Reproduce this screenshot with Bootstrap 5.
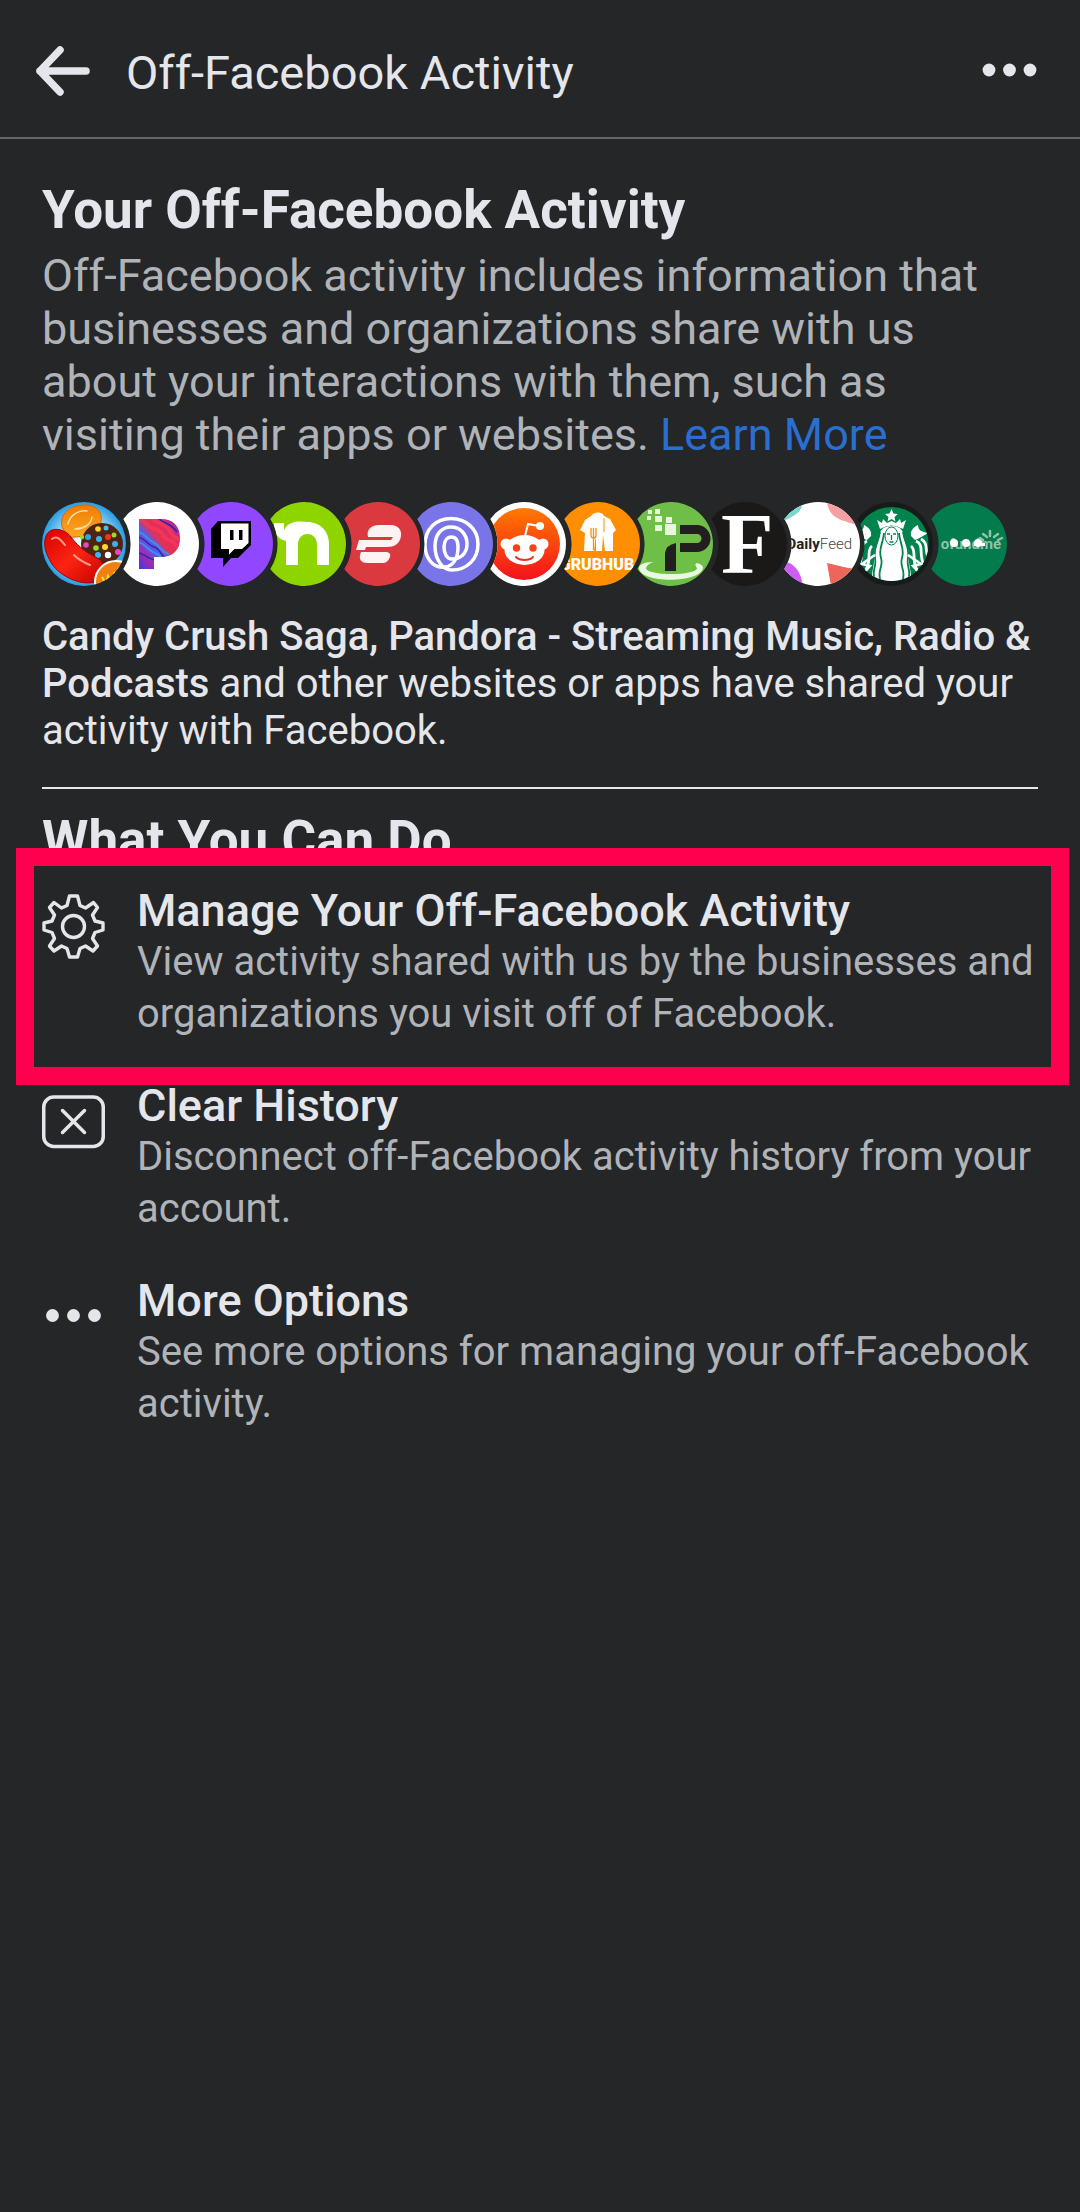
<!DOCTYPE html>
<html lang="en">
<head>
<meta charset="utf-8">
<meta name="viewport" content="width=device-width, initial-scale=1">
<title>Off-Facebook Activity</title>
<link href="https://cdn.jsdelivr.net/npm/bootstrap@5.3.0/dist/css/bootstrap.min.css" rel="stylesheet">
<style>
  :root { --page: #242628; --light: #e4e6eb; --muted: #b0b3b8; }
  body { background: var(--page); color: var(--light); font-family: Roboto, "Liberation Sans", sans-serif; }
  .topbar { height: 139px; padding: 9px 42px 0 36px; border-bottom: 2px solid #65676b; }
  .topbar-title { font-size: 47px; line-height: 56px; font-weight: 400; margin-left: 34px; }
  .icon-btn { background: none; border: 0; padding: 0; line-height: 0; }
  .page-body { padding: 40px 42px; }
  .section-title { font-size: 53px; line-height: 62px; font-weight: 700; margin: 0; }
  .intro { font-size: 45px; line-height: 53px; color: var(--muted); margin: 8px 0 0; }
  .intro a { color: #2a6fd0; text-decoration: none; }
  .app-strip { margin: 41px 42px 0 0; padding: 0; height: 84px; list-style: none; }
  .app-strip li { flex: 1 1 0; min-width: 0; }
  .app-strip svg { display: block; width: 84px; height: 84px; }
  .summary { font-size: 40px; line-height: 47px; margin: 27px 0 33px; }
  .summary strong { font-weight: 500; }
  .rule { border-top: 2px solid var(--light); margin: 0 0 20px; opacity: 1; }
  .options { margin-top: 15px; gap: 41px; }
  .option { gap: 32px; color: var(--light); text-decoration: none; }
  .option > svg { margin-top: 8px; }
  .option-title { font-size: 45px; line-height: 50px; font-weight: 500; margin: 0; }
  .option-text { font-size: 40px; line-height: 52px; color: var(--muted); margin: 0; }
  .callout { position: absolute; inset: -38px -31px -45px -26px; border: 18px solid #ff004f; pointer-events: none; }
</style>
</head>
<body>
<svg width="0" height="0" class="position-absolute" aria-hidden="true">
  <defs>
    <clipPath id="disc"><circle cx="42" cy="42" r="42"/></clipPath>
    <clipPath id="crescent"><path d="M8.3 16.9A42 42 0 1 1 8.3 67.1A47 47 0 0 0 8.3 16.9Z"/></clipPath>
    <radialGradient id="sky"><stop offset="0" stop-color="#fff"/><stop offset=".6" stop-color="#9fdcf8"/><stop offset="1" stop-color="#2a9be0"/></radialGradient>
    <linearGradient id="orangeCandy" x1="0" y1="0" x2="0" y2="1"><stop offset="0" stop-color="#f07c00"/><stop offset="1" stop-color="#ffa726"/></linearGradient>
    <linearGradient id="redCandy" x1="0" y1="0" x2="1" y2="1"><stop offset="0" stop-color="#d80000"/><stop offset=".5" stop-color="#fb2413"/><stop offset="1" stop-color="#c50000"/></linearGradient>
    <linearGradient id="pandora" x1="1" y1="0" x2="0" y2="1"><stop offset="0" stop-color="#7a2bc4"/><stop offset=".25" stop-color="#dd2a6c"/><stop offset=".45" stop-color="#e8304f"/><stop offset=".6" stop-color="#4a62ee"/><stop offset=".8" stop-color="#a02ab0"/><stop offset="1" stop-color="#3a3ce0"/></linearGradient>
    <linearGradient id="reddit" x1="0" y1="0" x2="0" y2="1"><stop offset="0" stop-color="#ff7a00"/><stop offset="1" stop-color="#f5101c"/></linearGradient>
    <clipPath id="pShape"><path d="M24 17H46C58 17 65 24 65 36S58 55 46 55H39V67H24Z"/></clipPath>
    <clipPath id="siren"><circle cx="42.5" cy="42" r="37"/></clipPath>
  </defs>
</svg>

<header class="topbar d-flex align-items-center">
  <button type="button" class="icon-btn" aria-label="Back">
    <svg width="56" height="56" viewBox="0 0 56 56" fill="none" stroke="#e4e6eb" stroke-width="7.5" stroke-linecap="round" stroke-linejoin="round"><path d="M24 5L4 26L24 47M4 26H50"/></svg>
  </button>
  <h1 class="topbar-title mb-0">Off-Facebook Activity</h1>
  <button type="button" class="icon-btn ms-auto" aria-label="More">
    <svg width="56" height="56" viewBox="0 0 56 56" fill="#e4e6eb"><circle cx="7" cy="25" r="6.4"/><circle cx="27.5" cy="25" r="6.4"/><circle cx="48" cy="25" r="6.4"/></svg>
  </button>
</header>

<main class="page-body">
  <h2 class="section-title">Your Off-Facebook Activity</h2>
  <p class="intro">Off-Facebook activity includes information that businesses and organizations share with us about your interactions with them, such as visiting their apps or websites. <a href="#learn">Learn More</a></p>

  <ul class="app-strip d-flex">
    <li><svg viewBox="0 0 84 84" role="img" aria-label="Candy Crush Saga"><g clip-path="url(#disc)">
      <rect width="84" height="84" fill="url(#sky)"/>
      <path d="M20 25C17 9 32 2 45 3C57 4 62 14 58 22C53 33 36 36 26 35Z" fill="url(#orangeCandy)" stroke="#d66a00" stroke-width="1"/>
      <path d="M26 22C28 12 38 8 45 9M33 27C41 27 49 23 50 15" fill="none" stroke="#ffe0a0" stroke-width="1.5" stroke-linecap="round"/>
      <circle cx="60" cy="42" r="21" fill="#4f2410"/>
      <g><circle cx="46" cy="35" r="3" fill="#29a8e8"/><circle cx="56" cy="27" r="2.8" fill="#ffd82a"/><circle cx="64" cy="26" r="2.5" fill="#3ec3f0"/><circle cx="66" cy="35" r="3" fill="#ee3326"/><circle cx="57" cy="37" r="3" fill="#3cb5f0"/><circle cx="44" cy="43" r="2.8" fill="#e04ac8"/><circle cx="54" cy="46" r="2.8" fill="#94dc2a"/><circle cx="63" cy="45" r="3" fill="#ffd82a"/><circle cx="73" cy="42" r="3" fill="#38b2ee"/><circle cx="56" cy="53" r="3" fill="#3cb5f0"/><circle cx="66" cy="53" r="3.2" fill="#fff"/><circle cx="72" cy="33" r="2.5" fill="#94dc2a"/><circle cx="76" cy="50" r="3" fill="#e04ac8"/><circle cx="40" cy="35" r="2.2" fill="#94dc2a"/></g>
      <path d="M4 34C8 24 22 26 29 35C37 46 47 52 57 57C66 64 62 77 53 80C38 84 18 74 10 62C3 51 1 42 4 34Z" fill="url(#redCandy)" stroke="#a80000" stroke-width="1"/>
      <path d="M10 37C15 33 19 38 23 43M32 53C37 58 43 61 48 63" fill="none" stroke="#ff9b85" stroke-width="2" stroke-linecap="round"/>
      <circle cx="74" cy="80" r="21" fill="#f08010" stroke="#fff" stroke-width="2"/>
      <path d="M60 75L64 82L66 74L70 80M72 70L75 77M76 66L80 73" fill="none" stroke="#ffe22a" stroke-width="2"/>
    </g></svg></li>
    <li><svg viewBox="0 0 84 84" role="img" aria-label="Pandora"><g clip-path="url(#crescent)"><rect width="84" height="84" fill="#fff"/>
      <g clip-path="url(#pShape)"><rect x="24" y="17" width="41" height="50" fill="url(#pandora)"/>
      <path d="M22 18C32 17 31 26 40 27S47 37 54 38S60 46 67 48M36 15C42 24 50 19 55 29S62 34 68 40" fill="none" stroke="#f0365a" stroke-width="4"/>
      <path d="M22 30C30 30 31 37 38 40S46 50 54 52M22 40C29 40 32 48 40 51S44 56 50 58" fill="none" stroke="#3f8bf5" stroke-width="2"/>
      <path d="M22 35C30 35 32 43 39 45S46 55 52 57M22 51C28 50 32 57 40 58M44 17C50 22 57 22 62 30" fill="none" stroke="#3525a8" stroke-width="1.5"/></g>
    </g></svg></li>
    <li><svg viewBox="0 0 84 84" role="img" aria-label="Twitch"><g clip-path="url(#crescent)"><rect width="84" height="84" fill="#9147ff"/>
      <path d="M29 19H62V43L49 56H42L34 65V56H22V27Z" fill="#000"/><path d="M32 21.5H59.5V41L53 47H45.5L40 52.5V47H32Z" fill="#fff"/><path d="M41 28H44.5V38H41ZM50 28H53.5V38H50Z" fill="#000"/>
    </g></svg></li>
    <li><svg viewBox="0 0 84 84" role="img" aria-label="Nextdoor"><g clip-path="url(#crescent)"><rect width="84" height="84" fill="#8ed500"/>
      <path d="M12 21H22V28C27 18 38 19 45 20C59 20 67 30 67 42V63H55V43C55 36 51 32 45.5 32S36 36 36 43V63H24V39C16 37 12 32 12 21Z" fill="#fff"/>
    </g></svg></li>
    <li><svg viewBox="0 0 84 84" role="img" aria-label="ExpressVPN"><g clip-path="url(#crescent)"><rect width="84" height="84" fill="#da3940"/>
      <path d="M32 35C30 27 36 23 43 23H55C62 23 66 28 65 34C64 42 58 45 51 45H30L29 48H20L23 38H55L57 35ZM25 50H50C55 50 55 54 53 57C51 61 48 61 45 61H31C25 61 22 57 25 50Z" fill="#fff2f3"/>
    </g></svg></li>
    <li><svg viewBox="0 0 84 84" role="img" aria-label="Life360"><g clip-path="url(#crescent)"><rect width="84" height="84" fill="#7974e7"/>
      <path d="M36 65C22 67 16 53 16 43C16 27 27 16.5 42 16.5S69 27 69 42S58 68 43 68C33 68 26 57 26 44C26 32 33 25 42 25S58 32 58 42S51 57 43 57C38 57 35 52 35 45C35 39 38 35 42.500 35S49 39 49 45C49 57 44 64 36 65Z" fill="none" stroke="#fff" stroke-width="3.5"/>
    </g></svg></li>
    <li><svg viewBox="0 0 84 84" role="img" aria-label="Reddit"><g clip-path="url(#crescent)"><rect width="84" height="84" fill="#fff"/><circle cx="42" cy="42" r="36" fill="url(#reddit)"/>
      <path d="M43 34L46 22L57 24" fill="none" stroke="#fff" stroke-width="2"/><circle cx="58" cy="24" r="4" fill="#fff"/><circle cx="24" cy="42" r="5.5" fill="#fff"/><circle cx="61" cy="42" r="5.5" fill="#fff"/><ellipse cx="42.5" cy="48" rx="20" ry="15" fill="#fff"/>
      <circle cx="34.5" cy="46" r="3.7" fill="#f8401a"/><circle cx="51" cy="46" r="3.7" fill="#f8401a"/><path d="M34 55C38 59 47 59 51 55" fill="none" stroke="#f03020" stroke-width="2" stroke-linecap="round"/>
    </g></svg></li>
    <li><svg viewBox="0 0 84 84" role="img" aria-label="Grubhub"><g clip-path="url(#crescent)"><rect width="84" height="84" fill="#ff8f00"/>
      <path d="M24 28L29 18L35 14C37 10 46 9 48 14L54 17L60 28L57 31V49H49L47 33L46 49H40V32L38 49H28L29 31Z" fill="#fff"/><path d="M35 26V33Q35 36 37.5 36T40 33V26M37.5 26V48" fill="none" stroke="#ff8f00" stroke-width="1.3"/><path d="M48 16V30" stroke="#ff8f00" stroke-width="1"/>
      <text x="41" y="68" text-anchor="middle" font-family="Roboto" font-weight="900" font-size="16" fill="#fff">GRUBHUB</text>
    </g></svg></li>
    <li><svg viewBox="0 0 84 84" role="img" aria-label="IPVanish"><g clip-path="url(#crescent)"><rect width="84" height="84" fill="#6fbe47"/>
      <path d="M19 8h4v4h-4zM26 7h5v5h-5zM18 14h4v4h-4zM26 14h7v6h-7zM37 15h6v6h-6zM26 23h7v6h-7zM36 22h11v11h-11z" fill="#e6f7dd"/>
      <path d="M10 65C8 82 74 82 74 65C71 60 63 60 68 66C68 74 17 74 17 66C19 61 24 60 26 60C18 60 12 61 10 65Z" fill="#e9f8e0"/>
      <path d="M51 27.5H68A9 9 0 0 1 68 45.5H51" fill="none" stroke="#231f20" stroke-width="9"/><path d="M36 69V51Q37 43 47 41V69Z" fill="#231f20"/>
    </g></svg></li>
    <li><svg viewBox="0 0 84 84" role="img" aria-label="Forbes"><g clip-path="url(#crescent)"><rect width="84" height="84" fill="#1b1818"/>
      <text x="18" y="71" font-family="Liberation Serif" font-weight="700" font-size="86" fill="#fff">F</text>
    </g></svg></li>
    <li><svg viewBox="0 0 84 84" role="img" aria-label="DailyFeed"><g clip-path="url(#crescent)"><rect width="84" height="84" fill="#fff"/>
      <path d="M0 0H26C27 9 20 13 8 19H0Z" fill="#79d8cd"/><path d="M51 0H84V24C74 21 71 20 65 18C58 15 52 10 51 0Z" fill="#f5a0a2"/><path d="M0 60H8C18 60 25 70 27 84H0Z" fill="#d05cf8"/><path d="M51 61L72 66L84 67V84H55Z" fill="#ee655a"/>
      <text x="76" y="47" text-anchor="end" font-family="Roboto" font-size="15" fill="#222"><tspan font-weight="700">Daily</tspan><tspan font-weight="300" fill="#444">Feed</tspan></text>
    </g></svg></li>
    <li><svg viewBox="0 0 84 84" role="img" aria-label="Starbucks"><g clip-path="url(#crescent)"><rect width="84" height="84" fill="#171c1a"/><circle cx="42.5" cy="42" r="37" fill="#00834c"/>
      <g clip-path="url(#siren)">
      <path d="M42.5 7L44.5 11.5L49 12L45.5 15L46.5 19.5L42.5 17L38.5 19.5L39.5 15L36 12L40.5 11.5Z" fill="#fff"/>
      <path d="M28 18L33 21L34 17L38 21L42.5 19L47 21L51 17L52 21L57 18L54 27Q42.5 20 31 27Z" fill="#fff"/>
      <path d="M31 32Q32 24 42.5 24T54 32C55 42 61 45 60 55S64 70 61 80H24C21 70 26 65 25 55S30 42 31 32Z" fill="#fff"/>
      <path d="M35 31C34 43 29 46 32 56S27 68 32 80M31 30C29 42 24 46 26 56S22 68 26 78M50 31C51 43 56 46 53 56S58 68 53 80M54 30C56 42 61 46 59 56S63 68 59 78" fill="none" stroke="#00834c" stroke-width="1.8"/>
      <ellipse cx="42.5" cy="34" rx="6.5" ry="9" fill="#fff" stroke="#00834c" stroke-width="1"/>
      <path d="M38 32H41M44 32H47M42.5 33V38M40.5 40H44.5" fill="none" stroke="#00834c" stroke-width="1.3"/>
      <path d="M36 45Q42 50 49 45L48 51C52 58 52 70 50 80H35C33 70 33 58 37 51Z" fill="#fff"/>
      <path d="M62 34C61 28 65 25 69 23C69 29 74 30 79 31C74 34 69 37 66 38ZM22 34C23 28 19 25 15 23C15 29 10 30 5 31C10 34 15 37 18 38Z" fill="#fff"/>
      <path d="M67 39C76 43 69 52 75 63M72 37C81 42 74 50 81 58M62 44C68 49 62 56 68 68M18 39C9 43 16 52 10 63M13 37C4 42 11 50 4 58M23 44C17 49 23 56 17 68" fill="none" stroke="#fff" stroke-width="2.8"/>
      <path d="M59 53L72 62L64 64L71 72M26 53L13 62L21 64L14 72" fill="none" stroke="#fff" stroke-width="2.5"/>
      </g>
    </g></svg></li>
    <li><svg viewBox="0 0 84 84" role="img" aria-label="gofundme"><g clip-path="url(#crescent)"><rect width="84" height="84" fill="#047b4c"/>
      <text x="78" y="47" text-anchor="end" font-family="Roboto" font-weight="700" font-size="15" fill="#91c3a9">ofundme</text>
      <path d="M57 36L60 38M60 32L64 35M67 29V34M75 32L71 35M79 36L75 38" stroke="#91c3a9" stroke-width="2.5" stroke-linecap="round"/>
      <g fill="#fff"><circle cx="31" cy="41" r="4"/><circle cx="43" cy="41" r="4"/><circle cx="55" cy="41" r="4"/><path d="M51 41h11v3H51z"/></g>
    </g></svg></li>
  </ul>

  <p class="summary"><strong>Candy Crush Saga, Pandora - Streaming Music, Radio &amp; Podcasts</strong> and other websites or apps have shared your activity with Facebook.</p>
  <hr class="rule">

  <h2 class="section-title">What You Can Do</h2>
  <nav class="options d-flex flex-column" aria-label="What You Can Do">
    <a href="#manage" class="option d-flex align-items-start position-relative">
      <svg class="flex-shrink-0" width="63" height="65" viewBox="0 0 63 65" fill="none" stroke="#e4e6eb" stroke-width="3.4" stroke-linejoin="round" aria-hidden="true">
        <path d="M27.5 2H35.5L38 11.5L43.5 14L51.5 8.5L55.5 13.5L50.5 21L53 27L61 29V36L53 38.5L50.5 44.5L55.5 52L51 57L43.5 52L38 54.5L35.5 63H27.5L25 54.5L19.5 52L12 57L7.5 52L12.5 44.5L10 38.5L2 36V29L10 27L12.5 21L7.5 13.5L12 8.5L19.5 14L25 11.5Z"/><circle cx="31.5" cy="32.5" r="11"/>
      </svg>
      <div>
        <h3 class="option-title">Manage Your Off-Facebook Activity</h3>
        <p class="option-text">View activity shared with us by the businesses and organizations you visit off of Facebook.</p>
      </div>
      <span class="callout"></span>
    </a>
    <a href="#clear" class="option d-flex align-items-start">
      <svg class="flex-shrink-0" width="63" height="65" viewBox="0 0 63 65" fill="none" stroke="#e4e6eb" stroke-width="3.5" stroke-linecap="round" aria-hidden="true"><rect x="1.75" y="8" width="59.5" height="49.5" rx="10"/><path d="M20.5 21.5L42.5 43.5M42.5 21.5L20.5 43.5"/></svg>
      <div>
        <h3 class="option-title">Clear History</h3>
        <p class="option-text">Disconnect off-Facebook activity history from your account.</p>
      </div>
    </a>
    <a href="#more" class="option d-flex align-items-start">
      <svg class="flex-shrink-0" width="63" height="65" viewBox="0 0 63 65" fill="#e4e6eb" aria-hidden="true"><circle cx="10.5" cy="31.5" r="6.4"/><circle cx="31.5" cy="31.5" r="6.4"/><circle cx="52.5" cy="31.5" r="6.4"/></svg>
      <div>
        <h3 class="option-title">More Options</h3>
        <p class="option-text">See more options for managing your off-Facebook activity.</p>
      </div>
    </a>
  </nav>
</main>
<script src="https://cdn.jsdelivr.net/npm/bootstrap@5.3.0/dist/js/bootstrap.bundle.min.js"></script>
</body>
</html>
